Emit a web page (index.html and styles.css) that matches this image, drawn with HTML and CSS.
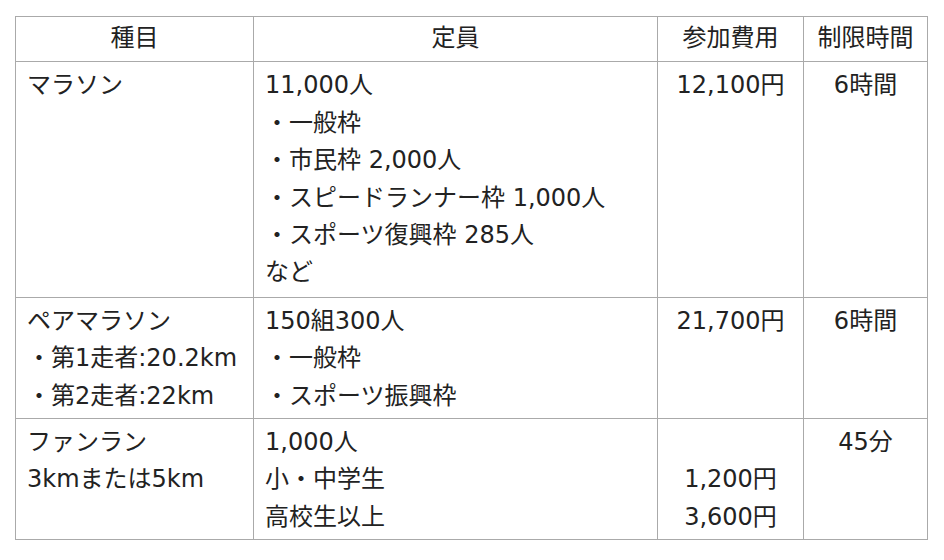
FILE: index.html
```html
<!DOCTYPE html>
<html lang="ja">
<head>
<meta charset="utf-8">
<link rel="stylesheet" href="styles.css">
</head>
<body>
<table class="races">
  <colgroup>
    <col class="c1"><col class="c2"><col class="c3"><col class="c4">
  </colgroup>
  <thead>
    <tr><th>種目</th><th>定員</th><th>参加費用</th><th>制限時間</th></tr>
  </thead>
  <tbody>
    <tr>
      <td>マラソン</td>
      <td>11,000人<br>・一般枠<br>・市民枠 2,000人<br>・スピードランナー枠 1,000人<br>・スポーツ復興枠 285人<br>など</td>
      <td class="center">12,100円</td>
      <td class="center">6時間</td>
    </tr>
    <tr>
      <td>ペアマラソン<br>・第1走者:20.2km<br>・第2走者:22km</td>
      <td>150組300人<br>・一般枠<br>・スポーツ振興枠</td>
      <td class="center">21,700円</td>
      <td class="center">6時間</td>
    </tr>
    <tr>
      <td>ファンラン<br>3kmまたは5km</td>
      <td>1,000人<br>小・中学生<br>高校生以上</td>
      <td class="center"><br>1,200円<br>3,600円</td>
      <td class="center">45分</td>
    </tr>
  </tbody>
</table>
</body>
</html>
```
FILE: styles.css
```css
html, body {
  margin: 0;
  background: #ffffff;
}
body {
  padding: 16px 0 0 15px;
  font-family: "DejaVu Sans", "Noto Sans CJK JP", sans-serif;
  color: #222222;
}
.races {
  border-collapse: collapse;
  width: 912px;
  table-layout: fixed;
  font-size: 24px;
  line-height: 37.4px;
}
.c1 { width: 238px; }
.c2 { width: 404px; }
.c3 { width: 146px; }
.c4 { width: 124px; }
.races th,
.races td {
  border: 1px solid #aaaaaa;
  vertical-align: top;
  text-align: left;
  padding: 5px 11px 3px 11px;
  font-weight: normal;
  white-space: nowrap;
}
.races th {
  text-align: center;
  padding: 3px 0 4px;
}
.races td.center {
  text-align: center;
  padding-left: 0;
  padding-right: 0;
}
.races tbody tr:first-child td {
  padding-bottom: 5px;
}
```
